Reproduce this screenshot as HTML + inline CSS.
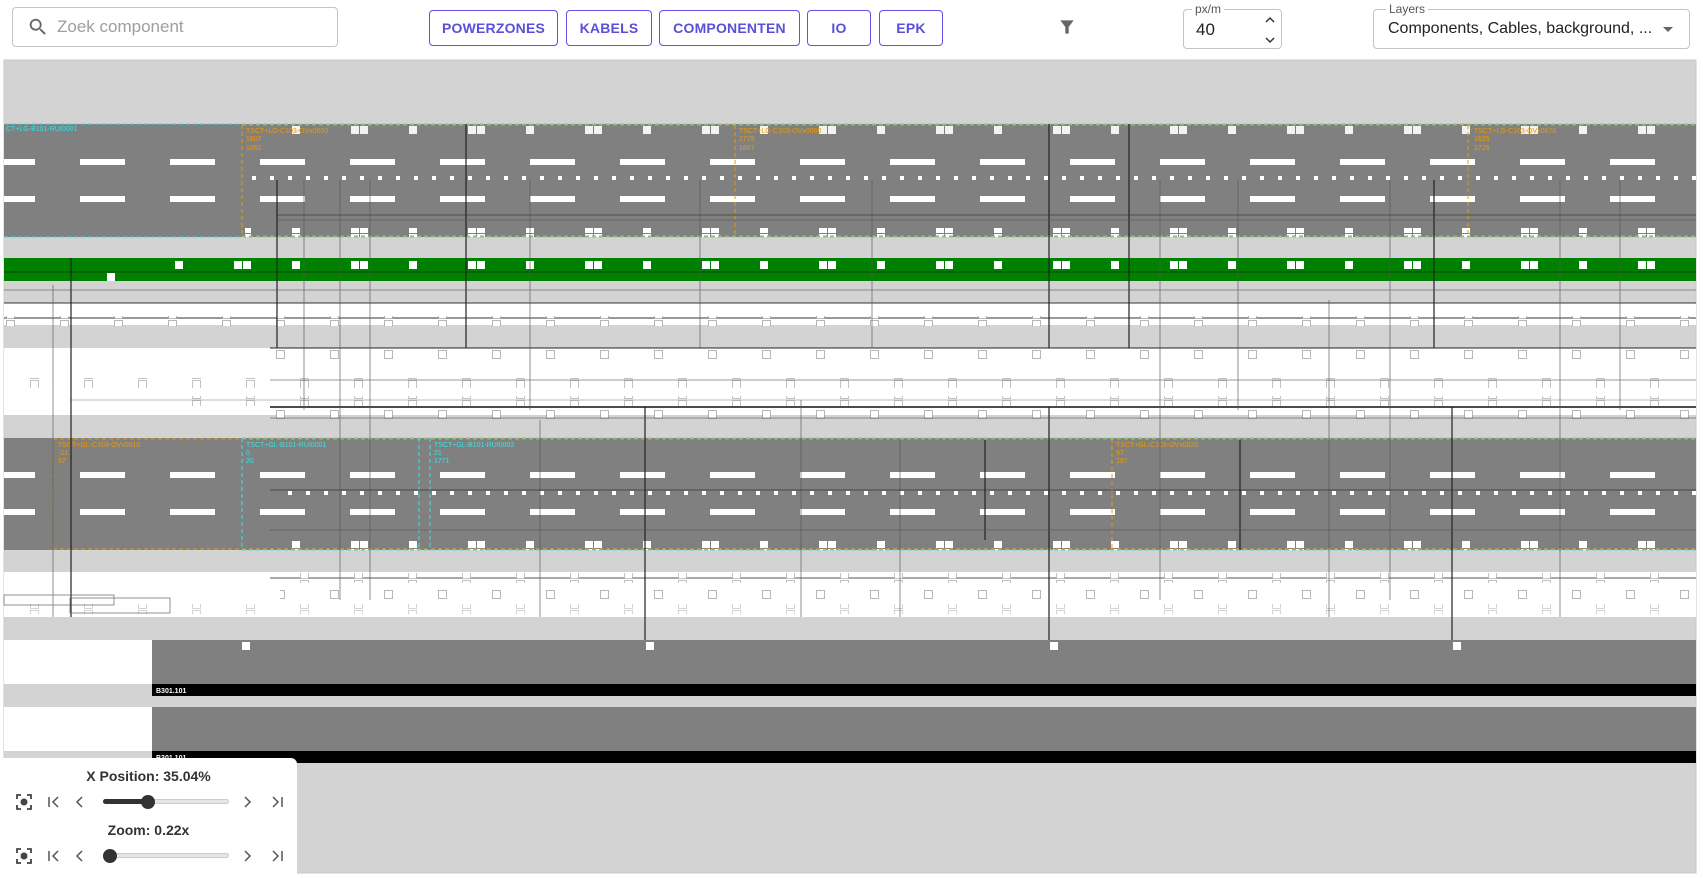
<!DOCTYPE html>
<html><head><meta charset="utf-8"><style>
*{box-sizing:border-box;margin:0;padding:0}
body{width:1703px;height:878px;overflow:hidden;background:#fff;font-family:"Liberation Sans",Arial,sans-serif;position:relative}
.abs{position:absolute}
.search{left:12px;top:7px;width:326px;height:40px;border:1px solid #c4c4c4;border-radius:4px}
.search span{position:absolute;left:44px;top:9px;font-size:17px;color:#9e9e9e}
.btn{top:10px;height:36px;border:1px solid #5f52e8;border-radius:4px;color:#5b4fd9;font-size:14px;font-weight:bold;letter-spacing:.2px;display:flex;align-items:center;justify-content:center}
.fld{border:1px solid #c4c4c4;border-radius:4px;top:9px;height:40px}
.lbl{position:absolute;top:-8px;background:#fff;padding:0 3px;font-size:12px;color:#555}
.panel{left:0;top:758px;width:297px;height:120px;background:#fff;border-top-right-radius:6px}
.ttl{position:absolute;width:297px;text-align:center;font-size:14px;font-weight:bold;color:#333}
.track{position:absolute;left:103px;width:126px;height:5px;border-radius:3px;background:#e6e6e6;border:1px solid #ccc}
.fill{position:absolute;left:103px;height:5px;border-radius:3px;background:#333}
.thumb{position:absolute;width:14px;height:14px;border-radius:50%;background:#333}
</style></head><body>
<svg class="abs" style="left:0;top:0" width="1703" height="878" xmlns="http://www.w3.org/2000/svg">
<defs>
<pattern id="dash" x="-10" y="0" width="90" height="6" patternUnits="userSpaceOnUse"><rect x="0" y="0" width="45" height="6" fill="#fff"/></pattern>
<pattern id="dot" x="0" y="0" width="18" height="4" patternUnits="userSpaceOnUse"><rect x="0" y="0" width="4" height="4" fill="#fff"/></pattern>
<pattern id="sq" x="6" y="0" width="54" height="10" patternUnits="userSpaceOnUse"><rect x="0.5" y="0.5" width="8" height="8" fill="#fff" stroke="#888" stroke-width="0.6"/></pattern>
<pattern id="sq2" x="30" y="0" width="54" height="10" patternUnits="userSpaceOnUse"><rect x="0.5" y="0.5" width="8" height="8" fill="#fff" stroke="#999" stroke-width="0.6"/></pattern>
<pattern id="wsq" x="0" y="0" width="117" height="9" patternUnits="userSpaceOnUse"><rect x="0" y="0" width="8" height="8" fill="#fff"/><rect x="9" y="0" width="8" height="8" fill="#fff"/><rect x="58" y="0" width="8" height="8" fill="#fff"/></pattern>
</defs>
<rect x="4" y="60" width="1692" height="813" fill="#d3d3d3" stroke="#c8c8c8"/>
<rect x="4" y="124" width="1692" height="113" fill="#808080"/>
<rect x="4" y="159" width="1692" height="6" fill="url(#dash)"/>
<rect x="4" y="196" width="1692" height="6" fill="url(#dash)"/>
<rect x="245" y="176" width="1451" height="4" fill="url(#dot)"/>
<rect x="245" y="228" width="1451" height="9" fill="url(#wsq)"/>
<rect x="280" y="126" width="1416" height="9" fill="url(#wsq)" opacity=".9"/>
<line x1="4" y1="124" x2="1696" y2="124" stroke="#3ee0e0" stroke-dasharray="4 3"/>
<line x1="242" y1="125" x2="1696" y2="125" stroke="#e89a10" stroke-dasharray="4 3"/>
<line x1="4" y1="237" x2="1696" y2="237" stroke="#3ee0e0" stroke-dasharray="4 3"/>
<line x1="242" y1="236" x2="1696" y2="236" stroke="#e89a10" stroke-dasharray="4 3"/>
<g stroke="#e89a10" stroke-dasharray="4 3"><line x1="242" y1="125" x2="242" y2="236"/><line x1="735" y1="125" x2="735" y2="236"/><line x1="1468" y1="125" x2="1468" y2="236"/></g>
<g fill="#3ee0e0" font-size="7"><text x="6" y="131">CT+LG-B101-RUI0001</text></g>
<g fill="#e89a10" font-size="7"><text x="246" y="133">TSCT+LG-C103-OVx0650</text><text x="246" y="141">1807</text><text x="246" y="150">1862</text>
<text x="739" y="133">TSCT+LG-C103-OVx0660</text><text x="739" y="141">1725</text><text x="739" y="150">1807</text>
<text x="1474" y="133">TSCT+LG-C103-OVx0670</text><text x="1474" y="141">1625</text><text x="1474" y="150">1725</text></g>
<rect x="4" y="258" width="1692" height="23" fill="#008000"/>
<line x1="4" y1="272" x2="1696" y2="272" stroke="#004d00"/>
<rect x="140" y="261" width="1556" height="9" fill="url(#wsq)"/>
<rect x="107" y="273" width="8" height="8" fill="#fff"/>
<rect x="4" y="303" width="1692" height="22" fill="#fff"/>
<line x1="4" y1="303" x2="1696" y2="303" stroke="#333"/>
<line x1="4" y1="318" x2="1696" y2="318" stroke="#333"/>
<rect x="4" y="316" width="1692" height="10" fill="url(#sq)"/>
<rect x="4" y="348" width="1692" height="67" fill="#fff"/>
<line x1="270" y1="348" x2="1696" y2="348" stroke="#222"/>
<rect x="260" y="350" width="1436" height="10" fill="url(#sq)"/>
<rect x="4" y="378" width="1692" height="10" fill="url(#sq2)"/>
<line x1="70" y1="400" x2="1696" y2="400" stroke="#bbb"/>
<rect x="160" y="396" width="1536" height="10" fill="url(#sq2)"/>
<line x1="270" y1="407" x2="1696" y2="407" stroke="#111" stroke-width="1.5"/>
<rect x="270" y="409" width="1426" height="10" fill="url(#sq)"/>
<rect x="4" y="438" width="1692" height="112" fill="#808080"/>
<rect x="4" y="472" width="1692" height="6" fill="url(#dash)"/>
<rect x="4" y="509" width="1692" height="6" fill="url(#dash)"/>
<rect x="280" y="491" width="1416" height="4" fill="url(#dot)"/>
<rect x="270" y="541" width="1426" height="9" fill="url(#wsq)"/>
<line x1="53" y1="439" x2="1696" y2="439" stroke="#e89a10" stroke-dasharray="4 3"/>
<line x1="242" y1="438" x2="1696" y2="438" stroke="#3ee0e0" stroke-dasharray="4 3"/>
<line x1="53" y1="549" x2="1696" y2="549" stroke="#e89a10" stroke-dasharray="4 3"/>
<line x1="242" y1="550" x2="1696" y2="550" stroke="#3ee0e0" stroke-dasharray="4 3"/>
<g stroke="#e89a10" stroke-dasharray="4 3"><line x1="53" y1="439" x2="53" y2="549"/><line x1="1112" y1="439" x2="1112" y2="549"/></g>
<g stroke="#3ee0e0" stroke-dasharray="4 3"><line x1="242" y1="438" x2="242" y2="550"/><line x1="419" y1="438" x2="419" y2="550"/><line x1="430" y1="438" x2="430" y2="550"/></g>
<g fill="#e89a10" font-size="7"><text x="58" y="447">TSCT+GL-C103-OVx0010</text><text x="58" y="455">-21</text><text x="58" y="463">97</text>
<text x="1116" y="447">TSCT+GL-C103-OVx0020</text><text x="1116" y="455">97</text><text x="1116" y="463">197</text></g>
<g fill="#3ee0e0" font-size="7"><text x="246" y="447">TSCT+GL-B101-RUI0001</text><text x="246" y="455">0</text><text x="246" y="463">20</text>
<text x="434" y="447">TSCT+GL-B101-RUI0002</text><text x="434" y="455">21</text><text x="434" y="463">1771</text></g>
<rect x="4" y="572" width="1692" height="45" fill="#fff"/>
<line x1="270" y1="578" x2="1696" y2="578" stroke="#555"/>
<rect x="280" y="573" width="1416" height="10" fill="url(#sq2)"/>
<rect x="280" y="590" width="1416" height="10" fill="url(#sq)"/>
<rect x="4" y="604" width="1692" height="10" fill="url(#sq2)" opacity=".7"/>
<g stroke="#222" stroke-width="1.2">
<line x1="466" y1="124" x2="466" y2="348"/><line x1="1049" y1="124" x2="1049" y2="348"/><line x1="1129" y1="124" x2="1129" y2="348"/><line x1="1434" y1="180" x2="1434" y2="348"/>
<line x1="71" y1="258" x2="71" y2="617"/>
<line x1="645" y1="407" x2="645" y2="642"/><line x1="1049" y1="407" x2="1049" y2="642"/><line x1="1452" y1="407" x2="1452" y2="642"/>
<line x1="645" y1="642" x2="1452" y2="642"/>
<line x1="277" y1="180" x2="277" y2="348"/><line x1="1240" y1="440" x2="1240" y2="550"/><line x1="985" y1="440" x2="985" y2="540"/>
</g>
<g stroke="#555" stroke-width="0.8" fill="none" opacity=".8">
<line x1="53" y1="285" x2="53" y2="617"/><line x1="304" y1="180" x2="304" y2="410"/><line x1="340" y1="180" x2="340" y2="600"/><line x1="370" y1="180" x2="370" y2="600"/>
<line x1="530" y1="180" x2="530" y2="410"/><line x1="700" y1="180" x2="700" y2="348"/><line x1="801" y1="400" x2="801" y2="617"/><line x1="872" y1="180" x2="872" y2="348"/>
<line x1="1160" y1="180" x2="1160" y2="600"/><line x1="1238" y1="180" x2="1238" y2="410"/><line x1="1329" y1="300" x2="1329" y2="617"/><line x1="1390" y1="180" x2="1390" y2="600"/>
<line x1="1560" y1="180" x2="1560" y2="617"/><line x1="1620" y1="180" x2="1620" y2="410"/><line x1="540" y1="420" x2="540" y2="617"/><line x1="900" y1="440" x2="900" y2="617"/>
<line x1="277" y1="220" x2="1696" y2="220"/><line x1="277" y1="215" x2="1696" y2="215" stroke="#333"/>
<line x1="4" y1="290" x2="1696" y2="290"/><line x1="270" y1="380" x2="1696" y2="380"/><line x1="270" y1="418" x2="1696" y2="418"/>
<line x1="270" y1="490" x2="1696" y2="490" stroke="#222"/><line x1="270" y1="530" x2="1696" y2="530"/>
<rect x="4" y="595" width="110" height="10"/><rect x="70" y="598" width="100" height="15"/>
</g>
<rect x="4" y="640" width="148" height="44" fill="#fff"/>
<rect x="152" y="640" width="1544" height="44" fill="#808080"/>
<rect x="152" y="684" width="1544" height="12" fill="#000"/>
<text x="156" y="693" fill="#fff" font-size="7" font-weight="bold">B301.101</text>
<rect x="242" y="642" width="8" height="8" fill="#fff"/><rect x="646" y="642" width="8" height="8" fill="#fff"/><rect x="1050" y="642" width="8" height="8" fill="#fff"/><rect x="1453" y="642" width="8" height="8" fill="#fff"/>
<rect x="4" y="707" width="148" height="44" fill="#fff"/>
<rect x="152" y="707" width="1544" height="44" fill="#808080"/>
<rect x="152" y="751" width="1544" height="12" fill="#000"/>
<text x="156" y="760" fill="#fff" font-size="7" font-weight="bold">B301.101</text>
</svg>

<div class="abs search"><svg class="abs" style="left:14px;top:8px" width="22" height="22" viewBox="0 0 24 24"><path d="M15.5 14h-.8l-.3-.3A6.5 6.5 0 1 0 9.5 16a6.5 6.5 0 0 0 4.2-1.6l.3.3v.8l5 5 1.5-1.5-5-5zm-6 0a4.5 4.5 0 1 1 0-9 4.5 4.5 0 0 1 0 9z" fill="#666"/></svg><span>Zoek component</span></div>
<div class="abs btn" style="left:429px;width:129px">POWERZONES</div>
<div class="abs btn" style="left:566px;width:86px">KABELS</div>
<div class="abs btn" style="left:659px;width:141px">COMPONENTEN</div>
<div class="abs btn" style="left:807px;width:64px">IO</div>
<div class="abs btn" style="left:879px;width:64px">EPK</div>
<svg class="abs" style="left:1057px;top:17px" width="20" height="20" viewBox="0 0 24 24"><path d="M4 4h16l-6 8v8h-4v-8z" fill="#666"/></svg>
<div class="abs fld" style="left:1183px;width:99px"><div class="lbl" style="left:8px">px/m</div><div style="position:absolute;left:12px;top:10px;font-size:17px;color:#222">40</div>
<svg class="abs" style="left:80px;top:4px" width="12" height="32" viewBox="0 0 12 32"><path d="M2 8l4-4 4 4M2 24l4 4 4-4" stroke="#333" stroke-width="1.5" fill="none"/></svg></div>
<div class="abs fld" style="left:1373px;width:317px"><div class="lbl" style="left:12px">Layers</div><div style="position:absolute;left:14px;top:10px;font-size:16px;color:#222;white-space:nowrap">Components, Cables, background, ...</div>
<svg class="abs" style="left:288px;top:16px" width="12" height="8"><path d="M1 1h10L6 6z" fill="#666"/></svg></div>

<div class="abs panel">
<div class="ttl" style="top:10px">X Position: 35.04%</div>
<div class="ttl" style="top:64px">Zoom: 0.22x</div>
<svg class="abs" style="left:15px;top:35px" width="18" height="18" viewBox="0 0 18 18"><circle cx="9" cy="9" r="3.5" fill="#444"/><path d="M2 6V2h4M12 2h4v4M16 12v4h-4M6 16H2v-4" stroke="#444" stroke-width="1.8" fill="none"/></svg>
<svg class="abs" style="left:15px;top:89px" width="18" height="18" viewBox="0 0 18 18"><circle cx="9" cy="9" r="3.5" fill="#444"/><path d="M2 6V2h4M12 2h4v4M16 12v4h-4M6 16H2v-4" stroke="#444" stroke-width="1.8" fill="none"/></svg>
<svg class="abs" style="left:45px;top:36px" width="250" height="16"><g stroke="#555" stroke-width="1.5" fill="none"><path d="M4 3v10M13 3l-5 5 5 5M37 3l-5 5 5 5M200 3l5 5-5 5M228 3l5 5-5 5M237 3v10"/></g></svg>
<svg class="abs" style="left:45px;top:90px" width="250" height="16"><g stroke="#555" stroke-width="1.5" fill="none"><path d="M4 3v10M13 3l-5 5 5 5M37 3l-5 5 5 5M200 3l5 5-5 5M228 3l5 5-5 5M237 3v10"/></g></svg>
<div class="track" style="top:41px"></div><div class="fill" style="top:41px;width:45px"></div><div class="thumb" style="left:141px;top:37px"></div>
<div class="track" style="top:95px"></div><div class="thumb" style="left:103px;top:91px"></div>
</div>
</body></html>
